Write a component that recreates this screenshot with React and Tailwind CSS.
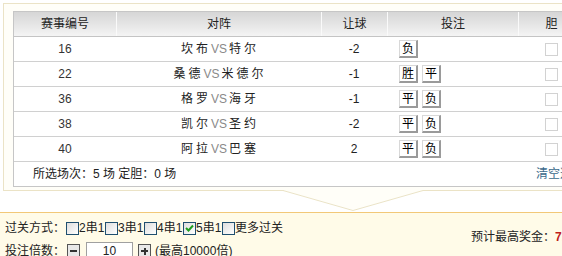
import React from 'react'

const matches = [
  { id: 16, home: '坎布', away: '特尔', rq: '-2', bets: ['负'] },
  { id: 22, home: '桑德', away: '米德尔', rq: '-1', bets: ['胜', '平'] },
  { id: 36, home: '格罗', away: '海牙', rq: '-1', bets: ['平', '负'] },
  { id: 38, home: '凯尔', away: '圣约', rq: '-2', bets: ['平', '负'] },
  { id: 40, home: '阿拉', away: '巴塞', rq: '2', bets: ['平', '负'] },
]

const cols = 'grid grid-cols-[102px_205px_66px_131px_66px]'

function BetButton({ label }) {
  return (
    <span className="flex h-[18px] w-[19px] items-center justify-center border-t border-l border-[#d8d8d8] border-r-2 border-b-2 border-r-[#9a9a9a] border-b-[#9a9a9a] bg-white text-[12px] leading-none text-black">
      {label}
    </span>
  )
}

function PassBox({ checked }) {
  return (
    <span className="flex h-[13px] w-[13px] items-center justify-center border border-[#1f4f6f] bg-linear-to-br from-[#dedede] to-white">
      {checked && (
        <svg width="9" height="8" viewBox="0 0 9 8">
          <path d="M1 4 L3.5 6.5 L8 1.5" fill="none" stroke="#1e9e1e" strokeWidth="2" />
        </svg>
      )}
    </span>
  )
}

export default function App() {
  return (
    <div className="h-[256px] w-[562px] overflow-hidden bg-white font-['Liberation_Sans','Noto_Sans_CJK_SC',sans-serif] text-[12px] text-[#333]">
      <div className="pl-[3px] pt-[3px]">
        <div className="relative w-[620px] border border-[#ebe3c6] bg-[#fffef8] pb-[3px] pl-[9px] pt-[7px]">
          <div className="w-[572px] border border-[#c6c6c6] bg-white">
            {/* header */}
            <div className={`${cols} h-[25px] border-b border-[#c4c4c4] bg-linear-to-b from-[#d6d6d6] to-[#f4f4f4] text-[#222]`}>
              <div className="flex items-center justify-center">赛事编号</div>
              <div className="flex items-center justify-center border-l border-[#fafafa]">对阵</div>
              <div className="flex items-center justify-center border-l border-[#fafafa]">让球</div>
              <div className="flex items-center justify-center border-l border-[#fafafa]">投注</div>
              <div className="flex items-center justify-center border-l border-[#fafafa]">胆</div>
            </div>

            {matches.map((m) => (
              <div key={m.id} className={`${cols} h-[25px] border-b border-[#d0d0d0]`}>
                <div className="flex items-center justify-center">{m.id}</div>
                <div className="flex items-center justify-center pl-[3px] text-[#222]">
                  <span className="tracking-[3px]">{m.home}</span>
                  <span className="mr-[2px] text-[#8a8a8a]">VS</span>
                  <span className="tracking-[3px]">{m.away}</span>
                </div>
                <div className="flex items-center justify-center text-[#222]">{m.rq}</div>
                <div className="flex items-center gap-[4px] pl-[12px]">
                  {m.bets.map((b) => (
                    <BetButton key={b} label={b} />
                  ))}
                </div>
                <div className="flex items-center justify-center">
                  <span className="h-[13px] w-[13px] border border-[#d2d2d2] bg-white" />
                </div>
              </div>
            ))}

            {/* summary */}
            <div className="flex h-[24px] items-center justify-between pl-[19px]">
              <span className="text-[#222]">所选场次：5 场 定胆：0 场</span>
              <span className="text-[#3b6a8c]">清空选择</span>
            </div>
          </div>

          {/* bubble arrow */}
          <svg className="absolute left-[279px] top-[186px]" width="141" height="22" viewBox="0 0 141 22">
            <rect x="1" y="0" width="139" height="1.5" fill="#fffef8" />
            <polygon points="0,0 70,20 140,0" fill="#fffef8" />
            <polyline points="0,0.5 70,20.5 140,0.5" fill="none" stroke="#ebe3c6" strokeWidth="1" />
          </svg>
        </div>
      </div>

      {/* bottom panel */}
      <div className="mt-[21px] flex h-[60px] w-[620px] border-t border-[#f2c878] bg-[#fffbe8] text-[#222]">
        <div className="w-[471px] pl-[5px] pt-[6px]">
          <div className="flex h-[18px] items-center leading-[16px]">
            <span>过关方式：</span>
            <span className="ml-[1px] flex items-center">
              <PassBox /><span className="w-[26px]">2串1</span>
              <PassBox /><span className="w-[26px]">3串1</span>
              <PassBox /><span className="w-[26px]">4串1</span>
              <PassBox checked /><span className="w-[26px]">5串1</span>
              <PassBox /><span>更多过关</span>
            </span>
          </div>
          <div className="mt-[4px] flex h-[20px] items-center leading-[16px]">
            <span>投注倍数：</span>
            <span className="ml-[2px] flex h-[14px] w-[13px] items-center justify-center border border-[#555] bg-[#e8e8e8]">
              <span className="h-[2px] w-[7px] bg-[#333]" />
            </span>
            <span className="ml-[6px] flex h-[18px] w-[47px] items-center justify-center border border-[#a0a0a0] bg-white">10</span>
            <span className="relative ml-[5px] flex h-[14px] w-[13px] items-center justify-center border border-[#555] bg-[#e8e8e8]">
              <span className="h-[2px] w-[7px] bg-[#333]" />
              <span className="absolute h-[7px] w-[2px] bg-[#333]" />
            </span>
            <span className="ml-[4px]">(最高10000倍)</span>
          </div>
        </div>
        <div className="pt-[16px] leading-[16px]">
          预计最高奖金：<span className="font-bold text-[#c0201a]">7,680.00</span>元
        </div>
      </div>
    </div>
  )
}
